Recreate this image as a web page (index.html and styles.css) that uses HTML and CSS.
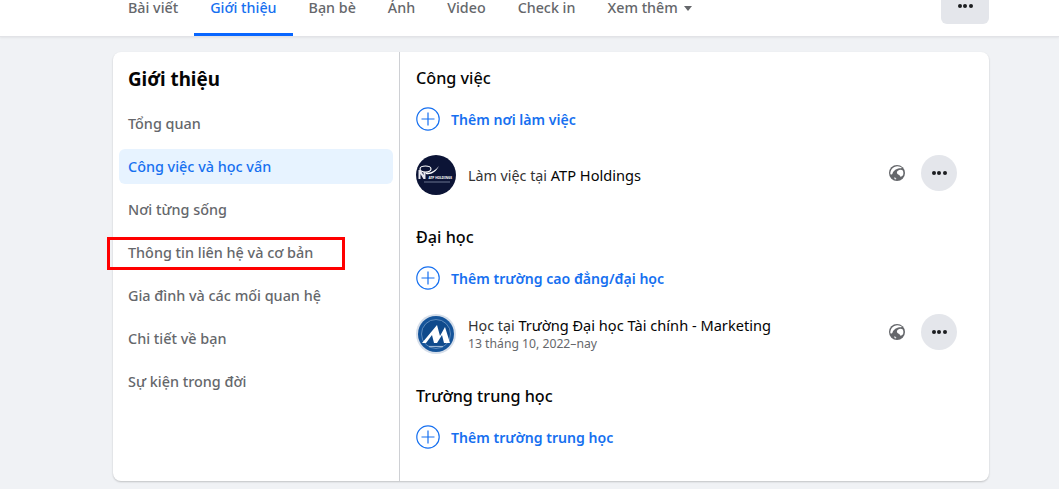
FILE: index.html
```html
<!DOCTYPE html>
<html lang="vi">
<head>
    <meta charset="UTF-8">
    <meta name="viewport" content="width=device-width, initial-scale=1.0">
    <title>Giới thiệu</title>
    <link rel="stylesheet" href="styles.css">
</head>
<body>
    <!-- Profile tabs -->
    <header class="tab-bar">
        <div class="tab-inner">
            <nav class="tabs">
                <a class="tab">Bài viết</a>
                <a class="tab tab-active">Giới thiệu</a>
                <a class="tab">Bạn bè</a>
                <a class="tab">Ảnh</a>
                <a class="tab">Video</a>
                <a class="tab">Check in</a>
                <a class="tab">Xem thêm <span class="caret"></span></a>
            </nav>
            <button class="more-square"><span class="dots"><i></i><i></i><i></i></span></button>
        </div>
    </header>

    <main class="about-card">
        <aside class="about-side">
            <h1>Giới thiệu</h1>
            <a class="side-link">Tổng quan</a>
            <a class="side-link side-active">Công việc và học vấn</a>
            <a class="side-link">Nơi từng sống</a>
            <a class="side-link side-marked">Thông tin liên hệ và cơ bản</a>
            <a class="side-link">Gia đình và các mối quan hệ</a>
            <a class="side-link">Chi tiết về bạn</a>
            <a class="side-link">Sự kiện trong đời</a>
        </aside>

        <section class="about-main">
            <h2>Công việc</h2>
            <a class="add-row">
                <svg class="plus" viewBox="0 0 24 24"><circle cx="12" cy="12" r="11.2"/><path d="M12 5.5v13M5.5 12h13"/></svg>
                Thêm nơi làm việc
            </a>
            <div class="entry">
                <svg class="logo" viewBox="0 0 40 40">
                    <circle cx="20" cy="20" r="20" fill="#0c1436"/>
                    <ellipse cx="9.500" cy="14" rx="5.500" ry="3" fill="none" stroke="#fff" stroke-width="1.200"/>
                    <path d="M9 17c4 2 9 0 14-6-3 6-8 9-13 8z" fill="#fff"/>
                    <path d="M2.500 15h2l3 5v-3h2v7H7.500l-3-5v5h-2z" fill="#e8e8f0"/>
                    <text x="12.500" y="23.500" class="logo-word">ATP HOLDINGS</text>
                    <path d="M8 27h26" stroke="#77809c" stroke-width=".9"/>
                </svg>
                <div class="entry-text">
                    <div>Làm việc tại <b>ATP Holdings</b></div>
                </div>
                <svg class="globe" viewBox="0 0 16 16">
                    <circle cx="8" cy="8" r="8" fill="#65676b"/>
                    <path d="M1.400 9.500C.8 5.500 4 1.300 8.500 1.300c1.800 0 3.500 .7 4.500 1.700-2 .2-3.500 .2-5 1-2.500 1-4 2.500-4.500 4.500-.3 1-1.500 1.500-2.100 .5z" fill="#fff"/>
                    <path d="M8.500 6c2-1.500 4-1.500 5.300-.5.700 1.500 .8 3.200 .2 4.800-1 .7-1.800 1.700-2.800 1.200-.4-1.500-1.700-1.500-2.700-2.500-.8-1-.8-2.200 0-3z" fill="#fff"/>
                    <path d="M5 12.500c1.200-.3 2 .3 2.500 1.500l-1.500.4c-.5-.5-1-1.200-1-1.900z" fill="#e8e9ec"/>
                </svg>
                <button class="more-round"><span class="dots"><i></i><i></i><i></i></span></button>
            </div>

            <h2>Đại học</h2>
            <a class="add-row">
                <svg class="plus" viewBox="0 0 24 24"><circle cx="12" cy="12" r="11.2"/><path d="M12 5.5v13M5.5 12h13"/></svg>
                Thêm trường cao đẳng/đại học
            </a>
            <div class="entry">
                <svg class="logo" viewBox="0 0 40 40">
                    <circle cx="20" cy="20" r="20" fill="#d5deea"/>
                    <circle cx="20" cy="20" r="18" fill="#15549a"/>
                    <circle cx="20" cy="20" r="14.500" fill="#0f4a8c" stroke="#7ea4cc" stroke-width=".7"/>
                    <path d="M6 29L21 11l3 11 5-9 5 16h-6l-2-8-5 8h-3l-2-8-6 8z" fill="#fff"/>
                    <path d="M13 32.500h14" stroke="#9db9d8" stroke-width="1.200"/>
                </svg>
                <div class="entry-text">
                    <div>Học tại <b>Trường Đại học Tài chính - Marketing</b></div>
                    <div class="entry-date">13 tháng 10, 2022–nay</div>
                </div>
                <svg class="globe" viewBox="0 0 16 16">
                    <circle cx="8" cy="8" r="8" fill="#65676b"/>
                    <path d="M1.400 9.500C.8 5.500 4 1.300 8.500 1.300c1.800 0 3.500 .7 4.500 1.700-2 .2-3.500 .2-5 1-2.500 1-4 2.500-4.500 4.500-.3 1-1.500 1.500-2.100 .5z" fill="#fff"/>
                    <path d="M8.500 6c2-1.500 4-1.500 5.300-.5.700 1.500 .8 3.200 .2 4.800-1 .7-1.800 1.700-2.800 1.200-.4-1.500-1.700-1.500-2.700-2.500-.8-1-.8-2.200 0-3z" fill="#fff"/>
                    <path d="M5 12.500c1.200-.3 2 .3 2.500 1.500l-1.500.4c-.5-.5-1-1.200-1-1.900z" fill="#e8e9ec"/>
                </svg>
                <button class="more-round"><span class="dots"><i></i><i></i><i></i></span></button>
            </div>

            <h2>Trường trung học</h2>
            <a class="add-row">
                <svg class="plus" viewBox="0 0 24 24"><circle cx="12" cy="12" r="11.2"/><path d="M12 5.5v13M5.5 12h13"/></svg>
                Thêm trường trung học
            </a>
        </section>
    </main>
</body>
</html>
```

FILE: styles.css
```css
*, *::after {
    box-sizing: border-box;
}
html, body {
    height: 489px;
    overflow: hidden;
}
body {
    margin: 0;
    background-color: #f0f2f5;
    font-family: "Noto Sans", Arial, sans-serif;
    color: #050505;
}

/* Tabs */
.tab-bar {
    height: 37px;
    background: #fff;
    border-bottom: 1px solid #e2e3e7;
    box-shadow: 0 1px 2px rgba(0,0,0,0.06);
}
.tab-inner {
    width: 876px;
    margin-left: 113px;
    display: flex;
    justify-content: space-between;
}
.tabs {
    display: flex;
    margin-left: -1px;
}
.tab {
    height: 36px;
    padding: 0 16px;
    font-size: 14.3px;
    font-weight: 500;
    line-height: 15px;
    color: #65676b;
    white-space: nowrap;
}
.tab-active {
    color: #1670f0;
    border-bottom: 3px solid #0866ff;
}
.caret {
    display: inline-block;
    width: 0;
    height: 0;
    margin-left: 2px;
    vertical-align: 2px;
    border-left: 4.5px solid transparent;
    border-right: 4.5px solid transparent;
    border-top: 5px solid #65676b;
}
.more-square {
    width: 48px;
    height: 24px;
    padding: 4px 0 0;
    border: none;
    border-radius: 0 0 6px 6px;
    background: #e4e6eb;
    display: flex;
    justify-content: center;
    align-items: flex-start;
}
.dots {
    display: flex;
    gap: 1.5px;
}
.dots i {
    width: 4px;
    height: 4px;
    border-radius: 50%;
    background: #1c1e21;
}

/* Card */
.about-card {
    width: 876px;
    height: 429px;
    margin: 15px 0 0 113px;
    display: flex;
    background: #fff;
    border-radius: 8px;
    box-shadow: 0 1px 2px rgba(0,0,0,0.2);
}
.about-side {
    width: 287px;
    padding: 0 6px;
    border-right: 1px solid #ced0d4;
    display: flex;
    flex-direction: column;
}
.about-side h1 {
    margin: 13px 0 13px 9px;
    font-size: 18.8px;
    line-height: 28px;
    font-weight: 700;
}
.side-link {
    height: 35px;
    margin-bottom: 8px;
    padding-left: 9px;
    font-size: 14.4px;
    font-weight: 500;
    line-height: 35px;
    color: #65676b;
    border-radius: 6px;
}
.side-active {
    color: #1670f0;
    background: #e7f3ff;
}
.side-marked {
    position: relative;
}
.side-marked::after {
    content: "";
    position: absolute;
    left: -12px;
    top: 2px;
    width: 238px;
    height: 33px;
    border: 3px solid #f00;
}

/* Main column */
.about-main {
    flex: 1;
    padding: 0 32px 0 16px;
}
.about-main h2 {
    margin: 0;
    padding-top: 15px;
    font-size: 16.2px;
    font-weight: 500;
    line-height: 22px;
}
.add-row {
    display: flex;
    align-items: center;
    gap: 11px;
    height: 24px;
    margin-top: 18px;
    font-size: 14.1px;
    font-weight: 600;
    color: #1670f0;
}
.plus {
    width: 24px;
    height: 24px;
    fill: none;
    stroke: #1670f0;
    stroke-width: 1.2;
}
.entry {
    display: flex;
    align-items: center;
    height: 40px;
    margin: 24px 0 16px;
}
.logo {
    width: 40px;
    height: 40px;
    flex: none;
}
.logo-word {
    font-size: 3.2px;
    font-weight: 700;
    fill: #fff;
}
.entry-text {
    flex: 1;
    padding-left: 12px;
    font-size: 14.3px;
    line-height: 18px;
    color: #333;
}
.entry-text b {
    font-size: 14.6px;
    font-weight: 450;
    color: #050505;
}
.entry-date {
    padding-top: 1px;
    font-size: 12.2px;
    line-height: 16px;
    color: #65676b;
}
.globe {
    width: 16px;
    height: 16px;
    margin-right: 16px;
    align-self: flex-start;
    margin-top: 10px;
}
.more-round {
    width: 36px;
    height: 36px;
    padding: 0;
    border: none;
    border-radius: 50%;
    background: #e4e6eb;
    display: flex;
    justify-content: center;
    align-items: center;
    align-self: flex-start;
}
```
